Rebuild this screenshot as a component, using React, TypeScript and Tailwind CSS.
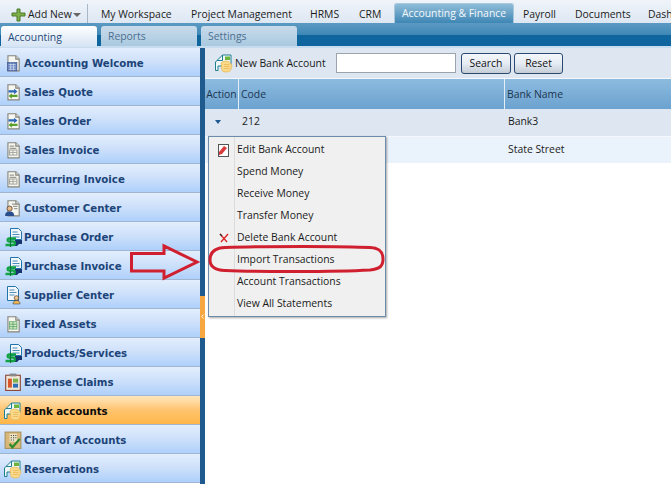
import React from 'react';
import { ChevronLeft } from 'lucide-react';

type IconKind = 'calc' | 'swap' | 'doc' | 'customer' | 'money' | 'supplier' | 'sheet' | 'claims' | 'bank' | 'chart';

const sideItems: { label: string; icon: IconKind; active?: boolean }[] = [
  { label: 'Accounting Welcome', icon: 'calc' },
  { label: 'Sales Quote', icon: 'swap' },
  { label: 'Sales Order', icon: 'swap' },
  { label: 'Sales Invoice', icon: 'doc' },
  { label: 'Recurring Invoice', icon: 'doc' },
  { label: 'Customer Center', icon: 'customer' },
  { label: 'Purchase Order', icon: 'money' },
  { label: 'Purchase Invoice', icon: 'money' },
  { label: 'Supplier Center', icon: 'supplier' },
  { label: 'Fixed Assets', icon: 'sheet' },
  { label: 'Products/Services', icon: 'money' },
  { label: 'Expense Claims', icon: 'claims' },
  { label: 'Bank accounts', icon: 'bank', active: true },
  { label: 'Chart of Accounts', icon: 'chart' },
  { label: 'Reservations', icon: 'bank' },
];

const menuItems = [
  'Edit Bank Account',
  'Spend Money',
  'Receive Money',
  'Transfer Money',
  'Delete Bank Account',
  'Import Transactions',
  'Account Transactions',
  'View All Statements',
];

const Paper = () => (
  <>
    <path d="M3.5 1.500h7l3 3v10.500h-10z" fill="#f7f7f2" stroke="#85857c" />
    <path d="M10.500 1.500v3h3" fill="#dcdcd4" stroke="#85857c" />
  </>
);

const BankIcon = () => (
  <svg width="20" height="20" viewBox="0 0 20 20">
    <path d="M1.500 17.500V9L8.500 2h8.500v11H4v4.500z" fill="#eef8fa" stroke="#1f7f8f" />
    <path d="M8.500 2v5.500H3" fill="none" stroke="#1f7f8f" />
    <rect x="11" y="3.500" width="5" height="3.500" fill="#6fb33f" />
    <path d="M7 10c2-2.500 7-2.500 9-.5l2 3-1.500 5c-2 2-6.500 2-8.500 0z" fill="#f9d98a" stroke="#e8b350" strokeWidth="0.700" />
    <path d="M10 11.500h5.500M10 13.500h5.500M10 15.500h5.500" stroke="#e8b350" strokeWidth="0.700" />
  </svg>
);

const MoneyIcon = () => (
  <svg width="20" height="20" viewBox="0 0 20 20">
    <path d="M7.500 1.500h8l3 3v8h-11z" fill="#f1f7fb" stroke="#2272ab" />
    <path d="M9.500 5h5M9.500 7.500h7M9.500 10h7" stroke="#2272ab" strokeWidth="0.800" />
    <path d="M12 13h7v4h-3l-2 2h-3z" fill="#16356e" />
    <path d="M13 11.500H6.500c-2.500 0-2.500 3 0 3h3.500c2.500 0 2.500 3.500 0 3.500H2.500" fill="none" stroke="#12a443" strokeWidth="2.300" />
    <path d="M7.500 9.500v10.500" stroke="#0c7a32" strokeWidth="1.200" />
  </svg>
);

const SideIcon = ({ kind }: { kind: IconKind }) => {
  if (kind === 'bank') return <BankIcon />;
  if (kind === 'money') return <MoneyIcon />;
  if (kind === 'calc')
    return (
      <svg width="18" height="18" viewBox="0 0 16 16">
        <Paper />
        <rect x="3" y="7.500" width="8.500" height="7.500" fill="#5a79b8" stroke="#3c5690" strokeWidth="0.500" />
        <path d="M4 9.500h6.500M4 11.500h6.500M4 13.500h6.500M6 8.500v6M8.500 8.500v6" stroke="#d5e0f4" strokeWidth="0.700" />
      </svg>
    );
  if (kind === 'swap')
    return (
      <svg width="18" height="18" viewBox="0 0 16 16">
        <Paper />
        <path d="M4 6.500h5V5l3 2.500L9 10V8.500H4z" fill="#2a67b8" />
        <path d="M12 10.500H7V9l-3 2.500L7 14v-1.500h5z" fill="#5aa02c" />
      </svg>
    );
  if (kind === 'doc')
    return (
      <svg width="18" height="18" viewBox="0 0 16 16">
        <Paper />
        <path d="M5 4.500h4M5 6.500h6" stroke="#9a9a92" />
        <rect x="5" y="8" width="6.500" height="4.500" fill="none" stroke="#9a9a92" strokeWidth="0.800" />
        <path d="M5 10.200h6.500M8 8v4.500" stroke="#9a9a92" strokeWidth="0.700" />
      </svg>
    );
  if (kind === 'customer')
    return (
      <svg width="18" height="18" viewBox="0 0 16 16">
        <Paper />
        <path d="M7 4.500h4M8 6.500h4M9 8.500h3" stroke="#9a9a92" />
        <circle cx="5" cy="8.500" r="2.300" fill="#e6b98c" stroke="#3a2a20" strokeWidth="0.600" />
        <path d="M1 15c0-3 1.500-4 4-4s4 1 4 4z" fill="#2a4f8f" />
      </svg>
    );
  if (kind === 'supplier')
    return (
      <svg width="20" height="20" viewBox="0 0 20 20">
        <path d="M4.500 1.500h8l3 3v11h-11z" fill="#f4f8fb" stroke="#2272ab" />
        <path d="M6.500 5h5M6.500 7.500h7M6.500 10h5" stroke="#2272ab" strokeWidth="0.800" />
        <circle cx="13.500" cy="13" r="2.300" fill="#f0c48e" stroke="#3a2a20" strokeWidth="0.600" />
        <path d="M10 19c0-2.500 1.500-3.500 3.500-3.500s3.500 1 3.500 3.500z" fill="#efb552" stroke="#23324f" strokeWidth="0.500" />
      </svg>
    );
  if (kind === 'sheet')
    return (
      <svg width="18" height="18" viewBox="0 0 16 16">
        <Paper />
        <rect x="5" y="6" width="6.500" height="6.500" fill="#cfe9c8" stroke="#4c9a52" strokeWidth="0.600" />
        <path d="M5 8.200h6.500M5 10.300h6.500M8 6v6.500" stroke="#4c9a52" strokeWidth="0.600" />
      </svg>
    );
  if (kind === 'claims')
    return (
      <svg width="18" height="18" viewBox="0 0 16 16">
        <rect x="1.500" y="2" width="13" height="13.500" fill="#f1e7d6" stroke="#8c4a3a" />
        <rect x="5" y="0.500" width="6" height="2.500" fill="#888" />
        <rect x="3.500" y="5" width="3.500" height="8" fill="#d8562b" />
        <rect x="8" y="5" width="4.500" height="3.500" fill="#7db24a" />
        <rect x="8" y="9.500" width="4.500" height="3.500" fill="#2f6fb5" />
      </svg>
    );
  return (
    <svg width="18" height="18" viewBox="0 0 16 16">
      <rect x="1" y="1" width="14" height="14.500" fill="#d9b877" stroke="#a8925e" />
      <rect x="5" y="2.500" width="6.500" height="7" fill="#efe7c8" />
      <path d="M6 4h1M8 4h1M10 4h1M6 6h1M8 6h1M10 6h1M6 8h1M8 8h1" stroke="#444" />
      <path d="M5 11.500 7.500 14.500 14 7" fill="none" stroke="#2e8b2e" strokeWidth="2" />
    </svg>
  );
};

const SideItem = ({ label, icon, active }: { label: string; icon: IconKind; active?: boolean }) => (
  <div
    className={`flex h-[29px] items-center border-b border-[#9fb5d0] bg-gradient-to-b ${
      active
        ? 'from-[#ffe6bd] via-[#ffc46f] to-[#ffb648] text-[#0b0b0b]'
        : 'from-[#e2eefd] via-[#cde0fa] to-[#aed0fb] text-[#1c4478]'
    }`}
  >
    <div className="flex w-6 shrink-0 justify-center pt-[1px] pl-[1px]">
      <SideIcon kind={icon} />
    </div>
    <span className="pt-[4px] font-['DejaVu_Sans'] text-[10.200px] font-bold whitespace-nowrap">{label}</span>
  </div>
);

const SubTab = ({ label, active }: { label: string; active?: boolean }) => (
  <div
    className={`flex w-[96px] items-center rounded-t-[3px] pt-[2px] pl-[7px] ${
      active
        ? 'h-[21px] -mb-[1px] bg-gradient-to-b from-white to-[#d5e3f3] text-[#1f4a7a]'
        : 'h-[20px] bg-gradient-to-b from-[#c9dbeb] to-[#a9c9e0] text-[#4d6f8f]'
    }`}
  >
    {label}
  </div>
);

const ToolButton = ({ label, width }: { label: string; width: string }) => (
  <button
    className={`h-[21px] rounded-[3px] border border-[#2b4a6f] bg-gradient-to-b from-[#f4f7fb] via-[#e6ecf4] to-[#c4ccd6] pt-[2px] text-[#111] ${width}`}
  >
    {label}
  </button>
);

const MenuIcon = ({ index }: { index: number }) => {
  if (index === 0)
    return (
      <svg width="11" height="13" viewBox="0 0 11 13">
        <rect x="0.500" y="0.500" width="10" height="12" fill="#fff" stroke="#555" />
        <path d="M1 8 6 2l3 2-5 6-3 1z" fill="#d93b3b" />
      </svg>
    );
  if (index === 4)
    return (
      <svg width="10" height="10" viewBox="0 0 10 10">
        <path d="M1 1 8 9M9 1 2 9" stroke="#d22" strokeWidth="1.300" />
        <path d="M1 1 3 3" stroke="#333" strokeWidth="1.300" />
      </svg>
    );
  return null;
};

export default function App() {
  return (
    <div className="relative h-[484px] w-[671px] overflow-hidden bg-white font-['Open_Sans','Noto_Sans',sans-serif] text-[10.400px] text-[#1b1b1b]">
      {/* top menu */}
      <div className="flex h-[23px] items-end overflow-hidden whitespace-nowrap bg-gradient-to-b from-[#f0f4fa] to-[#dde7f3]">
        <div className="flex h-[19px] w-[88px] shrink-0 items-center border-r border-[#a8b6c6] pt-[2px] pl-[11px]">
          <svg width="16" height="14" viewBox="0 0 16 14">
            <path d="M6 1h3v4h5v3H9v5H6V8H1V5h5z" fill="#7fae4b" stroke="#4a7a2a" />
          </svg>
          <span className="ml-[1px]">Add New</span>
          <span className="ml-[1px] h-0 w-0 border-x-[4px] border-t-[4px] border-x-transparent border-t-[#666]" />
        </div>
        <div className="flex h-[19px] w-[306px] shrink-0 items-center pt-[2px]">
          <span className="ml-[13px] w-[90px]">My Workspace</span>
          <span className="w-[119px]">Project Management</span>
          <span className="w-[49px]">HRMS</span>
          <span>CRM</span>
        </div>
        <div className="flex h-[20px] w-[120px] shrink-0 items-center justify-center rounded-t-[3px] border border-b-0 border-[#a8c8dc] bg-gradient-to-b from-[#8fbdd8] to-[#3d86b4] pt-[1px] text-[#f4f8fb]">
          Accounting &amp; Finance
        </div>
        <div className="flex h-[19px] shrink-0 items-center pt-[2px]">
          <span className="ml-[9px] w-[52px]">Payroll</span>
          <span className="w-[73px]">Documents</span>
          <span>Dash</span>
        </div>
      </div>

      {/* module tabs */}
      <div className="flex h-[23px] items-end gap-[4px] bg-[linear-gradient(#5b9ac3_0%,#3f88b6_50%,#0f659e_52%,#0f659e_100%)] pl-[1px]">
        <SubTab label="Accounting" active />
        <SubTab label="Reports" />
        <SubTab label="Settings" />
      </div>

      <div className="flex h-[438px] border-t-2 border-[#c8dcf0]">
        {/* left nav */}
        <div className="w-[200px] shrink-0">
          {sideItems.map((item) => (
            <SideItem key={item.label} {...item} />
          ))}
        </div>

        {/* splitter */}
        <div className="flex w-[5px] shrink-0 flex-col bg-[#1f5a8f]">
          <div className="mt-[248px] h-[42px] bg-[#f7a73f]">
            <ChevronLeft size={7} strokeWidth={3} className="mt-[17px] -ml-[1px] text-white" />
          </div>
        </div>

        {/* main */}
        <div className="min-w-0 flex-1">
          <div className="flex h-[31px] items-center border-b border-[#f4f8fc] bg-[#dde6f1] pl-[9px]">
            <BankIcon />
            <span className="ml-[1px] w-[101px] whitespace-nowrap pt-[2px]">New Bank Account</span>
            <div className="h-[20px] w-[120px] border border-[#9aa4ae] bg-white" />
            <ToolButton label="Search" width="ml-[5px] w-[50px]" />
            <ToolButton label="Reset" width="ml-[3px] w-[49px]" />
          </div>
          <div className="flex h-[30px] items-center bg-gradient-to-b from-[#8dbbdf] to-[#6ba2cf] pt-0 text-[#1d3550]">
            <div className="flex h-full w-[34px] items-center justify-center border-r border-[#e4eef7] pt-[2px]">Action</div>
            <div className="flex h-full w-[266px] items-center border-r border-[#e4eef7] pt-[2px] pl-[2px]">Code</div>
            <div className="pt-[2px] pl-[2px]">Bank Name</div>
          </div>
          <div className="flex h-[28px] items-center border-b border-[#f4f8fc] bg-[#dde6f1] pb-[2px]">
            <div className="flex w-[25px] justify-center">
              <span className="h-0 w-0 border-x-[3px] border-t-[4px] border-x-transparent border-t-[#1f5a8f]" />
            </div>
            <div className="w-[275px] pl-[12px]">212</div>
            <div className="pl-[3px]">Bank3</div>
          </div>
          <div className="flex h-[26px] items-center bg-[#eaf2fb]">
            <div className="w-[300px]" />
            <div className="pl-[3px]">State Street</div>
          </div>
        </div>
      </div>

      {/* action dropdown */}
      <div className="absolute left-[208px] top-[136px] w-[178px] border border-[#6d8bab] bg-[#f0f0f0] pt-[2px] pb-[1px] shadow-[1px_1px_2px_rgba(0,0,0,0.35)]">
        <div className="absolute bottom-0 left-[25px] top-0 w-px bg-[#dcdcdc]" />
        {menuItems.map((m, i) => (
          <div key={m} className="flex h-[22px] items-center">
            <div className="flex w-[28px] justify-center pl-[1px]">
              <MenuIcon index={i} />
            </div>
            <span className="whitespace-nowrap">{m}</span>
          </div>
        ))}
      </div>

      {/* red annotations */}
      <svg className="absolute left-[130px] top-[240px]" width="75" height="44" viewBox="0 0 75 44">
        <path d="M1.500 13.500H34V6l33 16-33 16v-7H1.500z" fill="none" stroke="#d0202f" strokeWidth="3" />
      </svg>
      <svg className="absolute left-[205px] top-[243px]" width="182" height="32" viewBox="0 0 182 32">
        <path
          d="M20 4.500C60 3 140 3 165 4.500 175 5 178 9 178 16c0 7-3 10-13 11-35 2-115 2-145 .5C10 27 5 23 5 17 5 10 9 5 20 4.500z"
          fill="none"
          stroke="#d0202f"
          strokeWidth="3"
        />
      </svg>
    </div>
  );
}
